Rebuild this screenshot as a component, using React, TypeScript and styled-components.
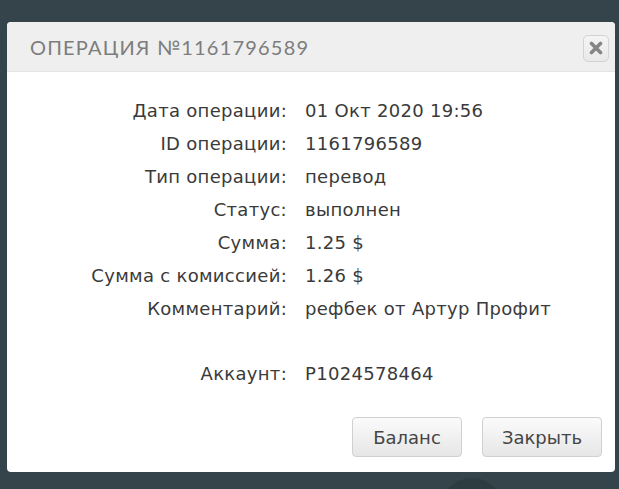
import React from "react";
import styled, { createGlobalStyle } from "styled-components";

const GlobalStyle = createGlobalStyle`
    html, body {
        margin: 0;
        padding: 0;
        background: #35434a;
    }
    body {
        font-family: "DejaVu Sans", "Noto Sans", sans-serif;
    }
`;

const Page = styled.div`
    position: relative;
    width: 619px;
    height: 489px;
    padding: 22px 0 0 7px;
    box-sizing: border-box;
    overflow: hidden;
    background: #35434a;
`;

/* faint shape of the page behind the overlay */
const BackdropBlob = styled.div`
    position: absolute;
    left: 440px;
    top: 478px;
    width: 64px;
    height: 64px;
    border-radius: 50%;
    background: #2c3c40;
`;

const Dialog = styled.div`
    position: relative;
    display: flex;
    flex-direction: column;
    width: 608px;
    height: 450px;
    background: #ffffff;
    border-radius: 4px;
    overflow: hidden;
`;

const Header = styled.div`
    display: flex;
    align-items: center;
    justify-content: space-between;
    height: 50px;
    padding: 0 6px 0 23px;
    background: #efefef;
    border-bottom: 1px solid #e4e4e4;
    box-sizing: border-box;
`;

const Title = styled.h2`
    margin: 0;
    font-family: "Lato", "Noto Sans", sans-serif;
    font-weight: 400;
    font-size: 20px;
    letter-spacing: 1.2px;
    color: #7d7d7d;
`;

const CloseButton = styled.button`
    display: flex;
    align-items: center;
    justify-content: center;
    width: 26px;
    height: 27px;
    margin-top: 3px;
    padding: 0;
    border: 1px solid #d3d3d3;
    border-radius: 5px;
    background: linear-gradient(#f4f4f4, #e9e9e9);
    cursor: pointer;
`;

const Body = styled.div`
    flex: 1;
    padding-top: 22px;
`;

const Details = styled.div`
    display: grid;
    grid-template-columns: 280px 1fr;
    column-gap: 18px;
    font-size: 18px;
    letter-spacing: 0.3px;
    line-height: 33px;
    color: #3a3a3a;
`;

const Label = styled.div`
    text-align: right;
    white-space: nowrap;
`;

const Value = styled.div`
    white-space: nowrap;
`;

const Spacer = styled.div<{ $h: number }>`
    grid-column: 1 / 3;
    height: ${(p) => p.$h}px;
`;

const Footer = styled.div`
    display: flex;
    justify-content: flex-end;
    gap: 20px;
    padding: 0 13px 15px 0;
`;

const Button = styled.button<{ $w: number }>`
    width: ${(p) => p.$w}px;
    height: 40px;
    padding: 0;
    border: 1px solid #d0d0d0;
    border-radius: 4px;
    background: linear-gradient(#fbfbfb, #e6e6e6);
    font-family: "DejaVu Sans", Verdana, sans-serif;
    font-size: 18px;
    color: #454545;
    cursor: pointer;
`;

const rows: [string, string][] = [
    ["Дата операции:", "01 Окт 2020 19:56"],
    ["ID операции:", "1161796589"],
    ["Тип операции:", "перевод"],
    ["Статус:", "выполнен"],
    ["Сумма:", "1.25 $"],
    ["Сумма с комиссией:", "1.26 $"],
    ["Комментарий:", "рефбек от Артур Профит"],
];

const App = () => (
    <>
        <GlobalStyle />
        <Page>
            <BackdropBlob />
            <Dialog>
                <Header>
                    <Title>ОПЕРАЦИЯ №1161796589</Title>
                    <CloseButton aria-label="close">
                        <svg width="14" height="14" viewBox="0 0 14 14">
                            <path
                                d="M2.5 2.5 L11.5 11.5 M11.5 2.5 L2.5 11.5"
                                stroke="#858585"
                                strokeWidth="3.6"
                                strokeLinecap="round"
                            />
                        </svg>
                    </CloseButton>
                </Header>
                <Body>
                    <Details>
                        {rows.map(([l, v]) => (
                            <React.Fragment key={l}>
                                <Label>{l}</Label>
                                <Value>{v}</Value>
                            </React.Fragment>
                        ))}
                        <Spacer $h={32} />
                        <Label>Аккаунт:</Label>
                        <Value>P1024578464</Value>
                    </Details>
                </Body>
                <Footer>
                    <Button $w={110}>Баланс</Button>
                    <Button $w={120}>Закрыть</Button>
                </Footer>
            </Dialog>
        </Page>
    </>
);

export default App;
